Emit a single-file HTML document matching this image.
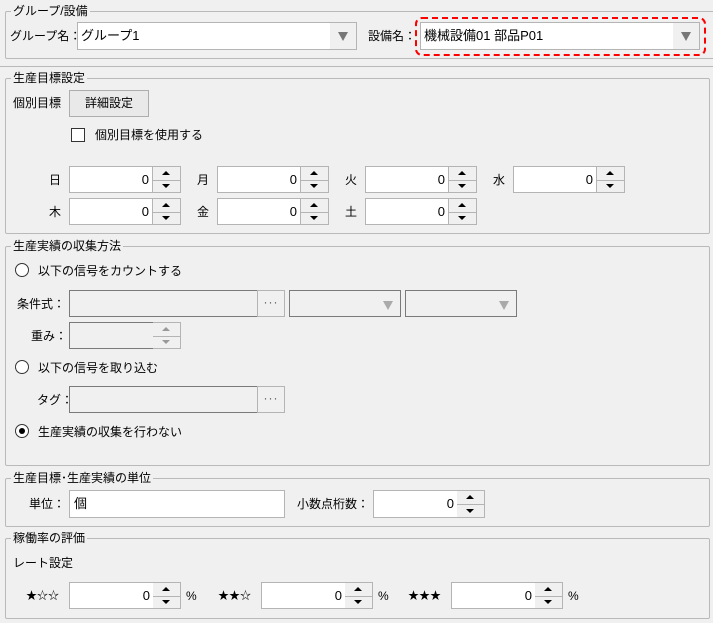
<!DOCTYPE html>
<html><head><meta charset="utf-8"><style>
*{margin:0;padding:0;box-sizing:border-box}
body{width:713px;height:623px;background:#f0f0f0;position:relative;overflow:hidden;font:12px "Liberation Sans","Noto Sans CJK JP",sans-serif;color:#000}
.a{position:absolute}
.g{position:absolute;border:1px solid #b9b9b9;border-radius:2px}
.gt{position:absolute;background:#f0f0f0;padding:0 2px;line-height:14px;white-space:nowrap}
.t{position:absolute;white-space:nowrap;line-height:14px}
.box{position:absolute;background:#fff;border:1px solid #b4b4b4}
.num{position:absolute;background:#fff;border:1px solid #b4b4b4;text-align:right;padding-right:3px;line-height:25px;font-size:13px}
.sp{position:absolute;border:1px solid #b4b4b4;border-left:none;background:#f0f0f0;width:28px}
.sp:before{content:"";position:absolute;left:0;right:0;top:50%;border-top:1px solid #b4b4b4}
.up,.dn{position:absolute;left:9px;width:0;height:0;border-left:4px solid transparent;border-right:4px solid transparent}
.up{top:4px;border-bottom:4px solid #000}
.dn{bottom:4px;border-top:4px solid #000}
.dis .up{border-bottom-color:#999}.dis .dn{border-top-color:#999}
.rad{position:absolute;width:14px;height:14px;border:1px solid #333;border-radius:50%;background:#fff}
.dot{position:absolute;left:3px;top:3px;width:6px;height:6px;border-radius:50%;background:#000}
.tri{position:absolute;width:0;height:0;border-left:5px solid transparent;border-right:5px solid transparent;border-top:9px solid #777}
</style></head><body>
<div class="g" style="left:5px;top:11px;width:712px;height:48px"></div>
<div class="gt" style="left:11px;top:4px">グループ/設備</div>
<div class="t" style="left:10px;top:29px">グループ名：</div>
<div class="box" style="left:77px;top:22px;width:280px;height:28px"></div>
<div class="a" style="left:330px;top:23px;width:26px;height:26px;background:#f0f0f0"></div>
<div class="tri" style="left:338px;top:32px"></div>
<div class="t" style="left:81px;top:29px;font-size:13px">グループ1</div>
<div class="t" style="left:368px;top:29px">設備名：</div>
<div class="a" style="left:415px;top:17px;width:291px;height:39px;border:2px dashed #f00;border-radius:7px"></div>
<div class="box" style="left:420px;top:22px;width:280px;height:28px"></div>
<div class="a" style="left:673px;top:23px;width:26px;height:26px;background:#f0f0f0"></div>
<div class="tri" style="left:681px;top:32px"></div>
<div class="t" style="left:424px;top:29px;font-size:13px">機械設備01 部品P01</div>
<div class="a" style="left:0;top:66px;width:713px;border-top:1px solid #b9b9b9"></div>
<div class="g" style="left:5px;top:78px;width:705px;height:156px"></div>
<div class="gt" style="left:11px;top:71px">生産目標設定</div>
<div class="t" style="left:13px;top:96px">個別目標</div>
<div class="a" style="left:69px;top:90px;width:80px;height:27px;border:1px solid #adadad;background:#e9e9e9;text-align:center;line-height:25px">詳細設定</div>
<div class="a" style="left:71px;top:128px;width:14px;height:14px;border:1px solid #333;background:#fff"></div>
<div class="t" style="left:95px;top:128px">個別目標を使用する</div>
<div class="t" style="left:49px;top:173px">日</div>
<div class="num" style="left:69px;top:166px;width:84px;height:27px">0</div><div class="sp" style="left:153px;top:166px;height:27px"><i class="up"></i><i class="dn"></i></div>
<div class="t" style="left:197px;top:173px">月</div>
<div class="num" style="left:217px;top:166px;width:84px;height:27px">0</div><div class="sp" style="left:301px;top:166px;height:27px"><i class="up"></i><i class="dn"></i></div>
<div class="t" style="left:345px;top:173px">火</div>
<div class="num" style="left:365px;top:166px;width:84px;height:27px">0</div><div class="sp" style="left:449px;top:166px;height:27px"><i class="up"></i><i class="dn"></i></div>
<div class="t" style="left:493px;top:173px">水</div>
<div class="num" style="left:513px;top:166px;width:84px;height:27px">0</div><div class="sp" style="left:597px;top:166px;height:27px"><i class="up"></i><i class="dn"></i></div>
<div class="t" style="left:49px;top:205px">木</div>
<div class="num" style="left:69px;top:198px;width:84px;height:27px">0</div><div class="sp" style="left:153px;top:198px;height:27px"><i class="up"></i><i class="dn"></i></div>
<div class="t" style="left:197px;top:205px">金</div>
<div class="num" style="left:217px;top:198px;width:84px;height:27px">0</div><div class="sp" style="left:301px;top:198px;height:27px"><i class="up"></i><i class="dn"></i></div>
<div class="t" style="left:345px;top:205px">土</div>
<div class="num" style="left:365px;top:198px;width:84px;height:27px">0</div><div class="sp" style="left:449px;top:198px;height:27px"><i class="up"></i><i class="dn"></i></div>
<div class="g" style="left:5px;top:246px;width:705px;height:220px"></div>
<div class="gt" style="left:11px;top:239px">生産実績の収集方法</div>
<div class="rad" style="left:15px;top:263px"></div>
<div class="t" style="left:38px;top:264px">以下の信号をカウントする</div>
<div class="t" style="left:17px;top:297px">条件式：</div>
<div class="a" style="left:69px;top:290px;width:189px;height:27px;border:1px solid #7a7a7a"></div>
<div class="a" style="left:257px;top:290px;width:28px;height:27px;border:1px solid #b4b4b4;text-align:center;line-height:22px;color:#555;letter-spacing:1px">···</div>
<div class="a" style="left:289px;top:290px;width:112px;height:27px;border:1px solid #7a7a7a"></div><div class="tri" style="left:383px;top:301px;border-top-color:#aaa"></div>
<div class="a" style="left:405px;top:290px;width:112px;height:27px;border:1px solid #7a7a7a"></div><div class="tri" style="left:499px;top:301px;border-top-color:#aaa"></div>
<div class="t" style="left:31px;top:329px">重み：</div>
<div class="a" style="left:69px;top:322px;width:85px;height:27px;border:1px solid #7a7a7a"></div>
<div class="sp dis" style="left:153px;top:322px;height:27px"><i class="up"></i><i class="dn"></i></div>
<div class="rad" style="left:15px;top:360px"></div>
<div class="t" style="left:38px;top:361px">以下の信号を取り込む</div>
<div class="t" style="left:37px;top:393px">タグ：</div>
<div class="a" style="left:69px;top:386px;width:189px;height:27px;border:1px solid #7a7a7a"></div>
<div class="a" style="left:257px;top:386px;width:28px;height:27px;border:1px solid #b4b4b4;text-align:center;line-height:22px;color:#555;letter-spacing:1px">···</div>
<div class="rad" style="left:15px;top:424px"><i class="dot"></i></div>
<div class="t" style="left:38px;top:425px">生産実績の収集を行わない</div>
<div class="g" style="left:5px;top:478px;width:705px;height:49px"></div>
<div class="gt" style="left:11px;top:471px">生産目標･生産実績の単位</div>
<div class="t" style="left:29px;top:497px">単位：</div>
<div class="box" style="left:69px;top:490px;width:216px;height:28px"></div>
<div class="t" style="left:74px;top:497px;font-size:13px">個</div>
<div class="t" style="left:297px;top:497px">小数点桁数：</div>
<div class="num" style="left:373px;top:490px;width:85px;height:28px">0</div><div class="sp" style="left:457px;top:490px;height:28px"><i class="up"></i><i class="dn"></i></div>
<div class="g" style="left:5px;top:538px;width:705px;height:81px"></div>
<div class="gt" style="left:11px;top:531px">稼働率の評価</div>
<div class="t" style="left:13px;top:556px">レート設定</div>
<div class="t" style="left:26px;top:589px;font-size:11px">★☆☆</div>
<div class="num" style="left:69px;top:582px;width:85px;height:27px">0</div><div class="sp" style="left:153px;top:582px;height:27px"><i class="up"></i><i class="dn"></i></div>
<div class="t" style="left:186px;top:589px">%</div>
<div class="t" style="left:218px;top:589px;font-size:11px">★★☆</div>
<div class="num" style="left:261px;top:582px;width:85px;height:27px">0</div><div class="sp" style="left:345px;top:582px;height:27px"><i class="up"></i><i class="dn"></i></div>
<div class="t" style="left:378px;top:589px">%</div>
<div class="t" style="left:408px;top:589px;font-size:11px">★★★</div>
<div class="num" style="left:451px;top:582px;width:85px;height:27px">0</div><div class="sp" style="left:535px;top:582px;height:27px"><i class="up"></i><i class="dn"></i></div>
<div class="t" style="left:568px;top:589px">%</div>
</body></html>
